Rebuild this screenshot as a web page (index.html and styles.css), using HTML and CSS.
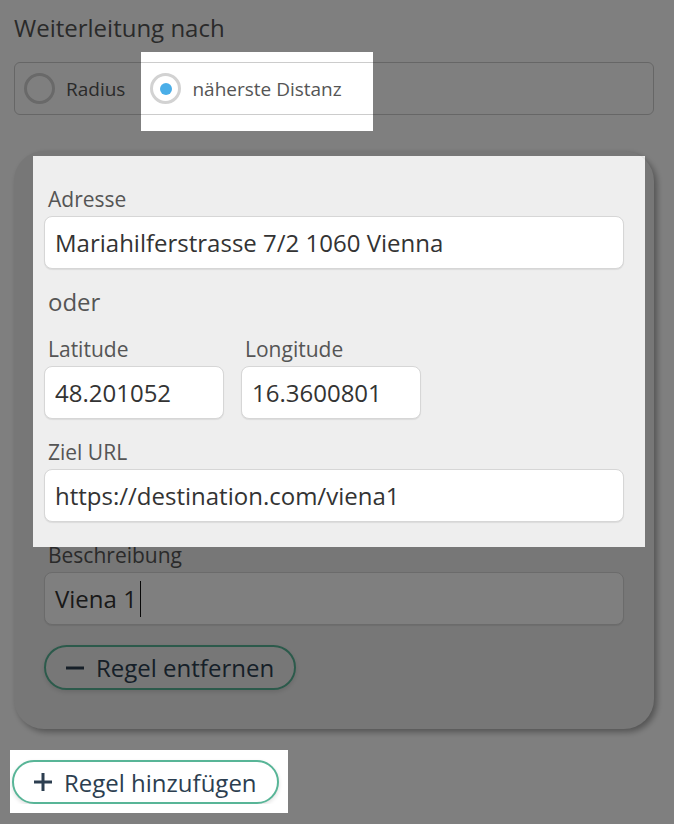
FILE: index.html
```html
<!DOCTYPE html>
<html lang="de">
<head>
    <meta charset="UTF-8">
    <meta name="viewport" content="width=device-width, initial-scale=1.0">
    <title>Weiterleitung</title>
    <link rel="stylesheet" href="styles.css">
</head>
<body>
    <div class="form">
        <h2 class="section-title">Weiterleitung nach</h2>

        <div class="radio-group">
            <label class="radio">
                <span class="radio-circle"></span>
                <span>Radius</span>
            </label>
            <label class="radio">
                <span class="radio-circle checked"></span>
                <span>näherste Distanz</span>
            </label>
        </div>

        <div class="rule-card">
            <div class="field">
                <label>Adresse</label>
                <input class="input" type="text" value="Mariahilferstrasse 7/2 1060 Vienna">
            </div>

            <p class="oder">oder</p>

            <div class="field-row">
                <div class="field small">
                    <label>Latitude</label>
                    <input class="input" type="text" value="48.201052">
                </div>
                <div class="field small">
                    <label>Longitude</label>
                    <input class="input" type="text" value="16.3600801">
                </div>
            </div>

            <div class="field">
                <label>Ziel URL</label>
                <input class="input" type="text" value="https://destination.com/viena1">
            </div>

            <div class="field last">
                <label>Beschreibung</label>
                <div class="input focused">Viena 1<span class="caret"></span></div>
            </div>

            <button class="btn">
                <svg width="18" height="18" viewBox="0 0 18 18"><path d="M0 9H18" stroke="currentColor" stroke-width="3"/></svg>
                Regel entfernen
            </button>
        </div>

        <button class="btn btn-add">
            <svg width="18" height="18" viewBox="0 0 18 18"><path d="M9 0V18M0 9H18" stroke="currentColor" stroke-width="3"/></svg>
            Regel hinzufügen
        </button>
    </div>

    <!-- tour overlay with three spotlight holes -->
    <svg class="tour-overlay" viewBox="0 0 674 824" preserveAspectRatio="none">
        <path fill-rule="evenodd" fill="rgba(0,0,0,0.5)"
              d="M0 0H674V824H0Z M141 52H373V131H141Z M33 156H645V547H33Z M10 750H288V813H10Z"/>
    </svg>
</body>
</html>
```

FILE: styles.css
```css
body {
    margin: 0;
    padding: 12px 20px 0 14px;
    background-color: #fff;
    font-family: 'Open Sans', sans-serif;
    color: #555;
}

.form {
    width: 640px;
}

.section-title {
    margin: 0 0 18px;
    font-size: 24px;
    line-height: 32px;
    font-weight: 400;
    color: #555;
}

.radio-group {
    display: flex;
    align-items: center;
    height: 53px;
    box-sizing: border-box;
    padding: 0 9px;
    border: 1px solid #ccc;
    border-radius: 6px;
}

.radio {
    display: flex;
    align-items: center;
    gap: 11px;
    margin-right: 25px;
    font-size: 19px;
    color: #555;
}

.radio-circle {
    display: flex;
    align-items: center;
    justify-content: center;
    width: 31px;
    height: 31px;
    box-sizing: border-box;
    border: 3px solid #d2d2d2;
    border-radius: 50%;
    background: #fff;
}

.radio-circle.checked::after {
    content: "";
    width: 12px;
    height: 12px;
    border-radius: 50%;
    background-color: #4aaee8;
}

.rule-card {
    margin-top: 36px;
    padding: 34px 30px 39px;
    background-color: #eee;
    border-radius: 30px;
    box-shadow: 3px 3px 6px rgba(0, 0, 0, 0.35);
}

.field {
    margin-bottom: 19px;
}

.field.last {
    margin-bottom: 20px;
}

.field label {
    display: block;
    margin-bottom: 3px;
    padding-left: 4px;
    font-size: 21px;
    line-height: 28px;
}

.field-row {
    display: flex;
    gap: 17px;
}

.field.small {
    width: 180px;
}

.input {
    display: block;
    width: 100%;
    height: 53px;
    box-sizing: border-box;
    padding: 0 10px;
    border: 1px solid #d6d6d6;
    border-radius: 8px;
    background: #fff;
    box-shadow: 0 1px 1px rgba(0, 0, 0, 0.08);
    font-family: 'Open Sans', sans-serif;
    font-size: 24px;
    color: #333;
}

.input.focused {
    display: flex;
    align-items: center;
}

.caret {
    display: inline-block;
    width: 1px;
    height: 36px;
    margin-left: 3px;
    background-color: #111;
}

.oder {
    margin: 0 0 19px;
    padding-left: 4px;
    font-size: 24px;
    line-height: 28px;
}

.btn {
    display: inline-flex;
    align-items: center;
    gap: 12px;
    height: 45px;
    padding: 0 20px;
    border: 2px solid #58b597;
    border-radius: 23px;
    background: transparent;
    box-shadow: 0 2px 4px rgba(0, 0, 0, 0.12);
    font-family: 'Open Sans', sans-serif;
    font-size: 24px;
    color: #2c3e50;
    cursor: pointer;
}

.btn-add {
    margin: 31px 0 0 -2px;
    height: 44px;
    background: #fff;
}

.tour-overlay {
    position: absolute;
    top: 0;
    left: 0;
    width: 674px;
    height: 824px;
    pointer-events: none;
}
```
